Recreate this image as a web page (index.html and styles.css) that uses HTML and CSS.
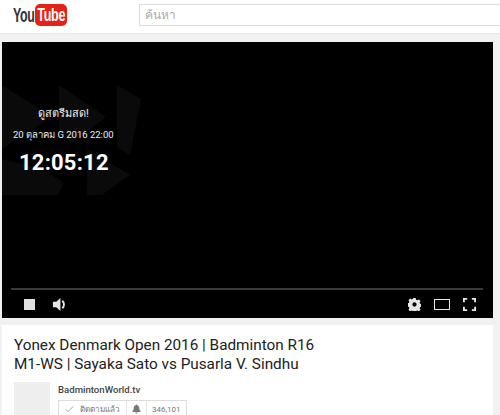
FILE: index.html
```html
<!DOCTYPE html>
<html lang="th">
<head>
<meta charset="utf-8">
<title>Yonex Denmark Open 2016</title>
<link rel="stylesheet" href="styles.css">
</head>
<body>
<header class="masthead">
  <div class="logo">
    <span class="logo-you">You</span>
    <span class="logo-tube"><span class="tube-text">Tube</span></span>
  </div>
  <div class="search">ค้นหา</div>
</header>
<main class="page">
  <section class="player">
    <svg class="watermark" viewBox="0 0 140 110" aria-hidden="true">
      <path class="wm" d="M0 0 L50 32 L0 64Z M57 0 L104 32 L70 58 L57 50Z M115 0 L139 14 L128 70 L115 62Z M0 74 L40 84 L62 98 L56 110 L0 110Z M85 64 L128 90 L100 110 L85 110Z"/>
    </svg>
    <div class="offline">
      <div class="live-label">ดูสตรีมสด!</div>
      <div class="live-date">20 ตุลาคม G 2016 22:00</div>
      <div class="live-count">12:05:12</div>
    </div>
    <div class="controls">
      <div class="progress"></div>
      <div class="buttons">
        <div class="group">
          <span class="stop"></span>
          <svg class="ic ic-vol" viewBox="0 0 16 16"><path class="fill" d="M1 5h3.500L9 1v14l-4.500-4H1z"/><path class="line" d="M11 4c2.400 2.300 2.400 5.700 0 8"/></svg>
        </div>
        <div class="group group-right">
          <svg class="ic" viewBox="0 0 14 14"><path class="fill" fill-rule="evenodd" d="M5.700 0h2.600l.4 1.900 1.300.6 1.700-1 1.800 1.800-1 1.700.5 1.300 2 .4v2.600l-2 .4-.5 1.300 1 1.700-1.800 1.800-1.700-1-1.300.5-.4 2H5.700l-.4-2-1.300-.5-1.700 1-1.800-1.800 1-1.700-.5-1.300-2-.4V5.700l2-.4.500-1.300-1-1.700L2.300 .5l1.700 1 1.300-.6zM7 4.700a2.300 2.300 0 1 0 0 4.600 2.300 2.300 0 0 0 0-4.600z"/></svg>
          <span class="theater"></span>
          <svg class="ic" viewBox="0 0 14 14"><path class="line square" d="M1 4.500V1h3.500M9.500 1H13v3.500M13 9.500V13H9.500M4.500 13H1V9.500"/></svg>
        </div>
      </div>
    </div>
  </section>
  <section class="info">
    <h1 class="title">Yonex Denmark Open 2016 | Badminton R16<br>M1-WS | Sayaka Sato vs Pusarla V. Sindhu</h1>
    <div class="owner">
      <div class="avatar"></div>
      <div class="owner-text">
        <div class="channel">BadmintonWorld.tv</div>
        <div class="subscribe">
          <span class="sub-cell sub-main">
            <svg class="check" viewBox="0 0 12 10"><path class="check-line" d="M1 5.500L4 8.500 11 1.500"/></svg>
            <span class="sub-label">ติดตามแล้ว</span>
          </span>
          <span class="sub-cell sub-bell">
            <svg class="bell" viewBox="0 0 12 12"><path class="bell-fill" d="M6 0c.6 0 1 .4 1 1 1.800.4 2.700 2 2.700 3.700 0 2 .6 3.300 1.800 4.300v1H.5V9c1.200-1 1.800-2.300 1.800-4.300C2.300 3 3.200 1.400 5 1c0-.6.4-1 1-1zM4.500 10.700h3C7.500 11.500 6.800 12 6 12s-1.500-.5-1.500-1.300z"/></svg>
          </span>
          <span class="sub-cell sub-count">346,101</span>
        </div>
      </div>
    </div>
  </section>
</main>
</body>
</html>
```
FILE: styles.css
```css
html, body {
  margin: 0;
  padding: 0;
  height: 415px;
  overflow: hidden;
  background: #f1f1f1;
  font-family: Roboto, "Noto Sans", sans-serif;
}
.masthead {
  display: flex;
  align-items: center;
  height: 33px;
  background: #fff;
  border-bottom: 1px solid #e8e8e8;
}
.logo {
  display: flex;
  align-items: center;
  margin-left: 13px;
  width: 126px;
  height: 33px;
  margin-top: -3px;
}
.logo-you {
  font-family: "Liberation Sans", sans-serif;
  font-size: 20px;
  font-weight: 700;
  color: #333;
  letter-spacing: -0.6px;
  transform: scaleX(0.62);
  transform-origin: left center;
  width: 22px;
  white-space: nowrap;
}
.logo-tube {
  display: flex;
  align-items: center;
  justify-content: center;
  width: 32px;
  height: 22px;
  border-radius: 5px;
  background: #e62117;
  color: #fff;
  font-family: "Liberation Sans", sans-serif;
  font-size: 19px;
  font-weight: 700;
}
.tube-text {
  display: block;
  transform: scaleX(0.66);
  letter-spacing: -0.4px;
}
.search {
  flex: 1;
  height: 20px;
  line-height: 20px;
  border: 1px solid #dcdcdc;
  border-right: 0;
  padding-left: 5px;
  font-family: "Noto Sans", sans-serif;
  font-size: 12px;
  color: #aaa;
  margin-top: -3px;
}
.page {
  padding: 8px 7px 0 2px;
}
.player {
  position: relative;
  height: 276px;
  background: #000;
  display: flex;
  flex-direction: column;
  justify-content: flex-end;
  overflow: hidden;
}
.watermark {
  position: absolute;
  left: 0;
  top: 43px;
  width: 140px;
  height: 110px;
}
.wm { fill: #0a0a0a; }
.offline {
  position: absolute;
  left: 0;
  top: 0;
  color: #eee;
}
.live-label {
  position: absolute;
  left: 36px;
  top: 65px;
  white-space: nowrap;
  font-size: 11px;
  line-height: 14px;
}
.live-date {
  position: absolute;
  left: 11px;
  top: 86px;
  white-space: nowrap;
  font-size: 9.5px;
  line-height: 14px;
}
.live-count {
  position: absolute;
  left: 17px;
  top: 107px;
  white-space: nowrap;
  font-size: 22px;
  line-height: 28px;
  font-weight: 700;
  color: #fff;
  letter-spacing: 0.2px;
}
.controls {
  position: relative;
  padding: 0 10px 0 9px;
}
.progress {
  height: 2px;
  background: #3a3a3a;
  margin-bottom: 1px;
}
.buttons {
  display: flex;
  justify-content: space-between;
  align-items: center;
  height: 27px;
}
.group {
  display: flex;
  align-items: center;
  gap: 17px;
  margin-left: 13px;
}
.group-right {
  gap: 13px;
  margin-left: 0;
  margin-right: 7px;
}
.stop {
  width: 11px;
  height: 11px;
  background: #e0e0e0;
}
.ic {
  width: 13px;
  height: 13px;
}
.ic-vol {
  width: 15px;
  height: 15px;
}
.fill { fill: #e6e6e6; }
.line {
  fill: none;
  stroke: #e6e6e6;
  stroke-width: 2;
}
.square { stroke-linecap: butt; }
.theater {
  width: 14px;
  height: 9px;
  border: 1px solid #e6e6e6;
}
.info {
  margin-top: 7px;
  height: 90px;
  background: #fff;
  padding: 11px 12px 0;
}
.title {
  margin: 0;
  font-size: 15.3px;
  line-height: 19px;
  font-weight: 400;
  color: #222;
  white-space: nowrap;
}
.owner {
  display: flex;
  gap: 8px;
  margin-top: 8px;
}
.avatar {
  width: 36px;
  height: 48px;
  background: #eeeeee;
}
.channel {
  font-size: 9.6px;
  font-weight: 500;
  color: #444;
  line-height: 13px;
  margin-top: 1px;
}
.subscribe {
  display: flex;
  height: 16px;
  margin-top: 4px;
  border: 1px solid #ddd;
  width: max-content;
  font-size: 8px;
  color: #777;
}
.sub-cell {
  display: flex;
  align-items: center;
  padding: 0 5px;
  border-right: 1px solid #e4e4e4;
  white-space: nowrap;
}
.sub-cell:last-child { border-right: 0; }
.sub-main {
  gap: 6px;
  padding-left: 6px;
  width: 56px;
  font-family: "Noto Sans", sans-serif;
}
.sub-bell {
  justify-content: center;
  width: 9px;
}
.sub-label { font-size: 8.2px; }
.check {
  width: 9px;
  height: 8px;
}
.check-line {
  fill: none;
  stroke: #999;
  stroke-width: 1.2;
}
.bell {
  width: 9px;
  height: 10px;
}
.bell-fill { fill: #777; }
```
